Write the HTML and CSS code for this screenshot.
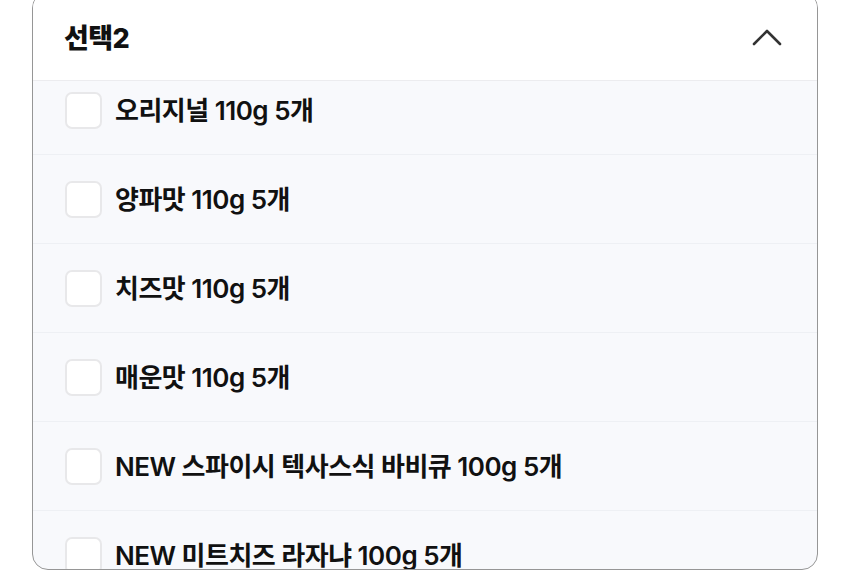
FILE: index.html
```html
<!DOCTYPE html>
<html lang="ko">
<head>
  <meta charset="UTF-8">
  <title>옵션 선택</title>
  <link rel="stylesheet" href="styles.css">
</head>
<body>

  <div class="panel">
    <div class="panel-header">
      <span class="panel-title">선택2</span>
      <svg class="chevron" width="30" height="18" viewBox="0 0 30 18">
        <polyline points="2,16 15,3 28,16" fill="none" stroke="#333" stroke-width="2.6" stroke-linecap="round" stroke-linejoin="round"/>
      </svg>
    </div>

    <div class="option-scroll">
      <ul class="option-list">
        <li class="option"><span class="check"></span><span class="label">오리지널 110g 5개</span></li>
        <li class="option"><span class="check"></span><span class="label">양파맛 110g 5개</span></li>
        <li class="option"><span class="check"></span><span class="label">치즈맛 110g 5개</span></li>
        <li class="option"><span class="check"></span><span class="label">매운맛 110g 5개</span></li>
        <li class="option"><span class="check"></span><span class="label">NEW 스파이시 텍사스식 바비큐 100g 5개</span></li>
        <li class="option"><span class="check"></span><span class="label">NEW 미트치즈 라자냐 100g 5개</span></li>
      </ul>
    </div>
  </div>

</body>
</html>
```

FILE: styles.css
```css
body {
  margin: 0;
  background: #fff;
  font-family: Inter, "Noto Sans CJK KR", sans-serif;
  color: #111;
  overflow: hidden;
}
.panel {
  box-sizing: border-box;
  width: 786px;
  height: 578px;
  margin: -8px 0 0 32px;
  border: 1.5px solid #969696;
  border-radius: 16px;
  overflow: hidden;
  display: flex;
  flex-direction: column;
  background: #f8f9fc;
}
.panel-header {
  flex: none;
  height: 88px;
  padding: 2px 35px 0 31px;
  box-sizing: border-box;
  display: flex;
  align-items: center;
  justify-content: space-between;
  background: #fff;
  border-bottom: 1.5px solid #ececef;
}
.panel-title {
  font-size: 27px;
  font-weight: 800;
  letter-spacing: -0.6px;
  padding-bottom: 2px;
}
.chevron {
  display: block;
  margin-bottom: 2px;
}
.option-scroll {
  flex: 1;
  overflow: hidden;
}
.option-list {
  list-style: none;
  margin: -15px 0 0;
  padding: 0;
}
.option {
  height: 89px;
  box-sizing: border-box;
  display: flex;
  align-items: center;
  gap: 13px;
  padding-left: 32px;
  border-bottom: 1px solid #eef0f4;
}
.check {
  width: 37px;
  height: 37px;
  box-sizing: border-box;
  border: 2px solid #e8e8ea;
  border-radius: 7px;
  background: #fff;
  flex: none;
}
.label {
  font-size: 26px;
  font-weight: 600;
  letter-spacing: -0.5px;
  padding-bottom: 3px;
}
```
